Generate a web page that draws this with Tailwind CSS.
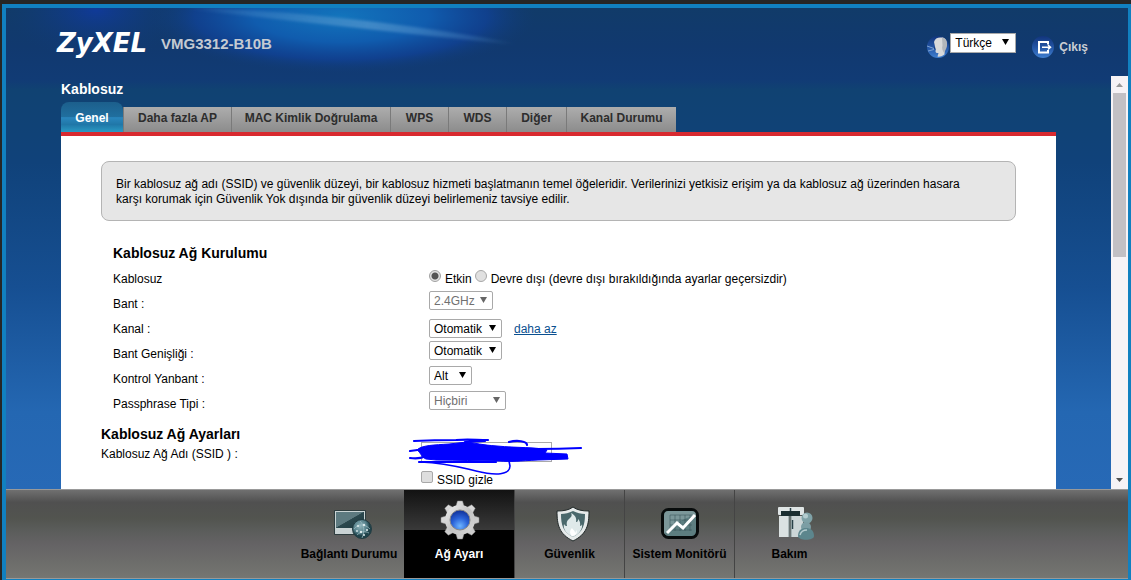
<!DOCTYPE html>
<html lang="tr">
<head>
<meta charset="utf-8">
<title>ZyXEL VMG3312-B10B</title>
<script src="https://cdn.jsdelivr.net/npm/@tailwindcss/browser@4"></script>
</head>
<body class="h-screen overflow-hidden bg-[#262626] pt-1 pl-0.5 font-['Liberation_Sans',Arial,sans-serif] text-[12px] leading-[15px] text-black">
<div class="flex h-full flex-col border-4 border-b border-r-[3px] border-[#1180c0]">

  <div class="flex min-h-0 flex-1 flex-col bg-linear-[180deg,#113b69_0%,#11396f_8%,#113b75_15%,#104272_17%,#10427a_32%,#164f92_58%,#2467b2_84%,#2769b6_100%]">
    <header class="relative flex h-[68px] shrink-0 items-start pr-10 pl-[51px]">
      <svg class="pointer-events-none absolute top-0 left-0 h-[68px] w-[540px]" viewBox="0 0 540 68" aria-hidden="true">
        <defs>
          <radialGradient id="g1"><stop offset="0" stop-color="#1274bc"/><stop offset=".45" stop-color="#105cae"/><stop offset=".75" stop-color="#104296" stop-opacity=".8"/><stop offset="1" stop-color="#113b75" stop-opacity="0"/></radialGradient>
          <radialGradient id="g2"><stop offset="0" stop-color="#103a98"/><stop offset="1" stop-color="#113b75" stop-opacity="0"/></radialGradient>
          <linearGradient id="g3"><stop offset="0" stop-color="#5a9ad0" stop-opacity="0"/><stop offset=".55" stop-color="#5a9ad0" stop-opacity=".6"/><stop offset="1" stop-color="#5a9ad0" stop-opacity="0"/></linearGradient>
          <filter id="soft"><feGaussianBlur stdDeviation="1.500"/></filter>
        </defs>
        <ellipse cx="90" cy="2" rx="90" ry="50" fill="url(#g2)"/>
        <ellipse cx="335" cy="8" rx="195" ry="58" fill="url(#g1)"/>
        <path d="M180 0Q340 6 510 36Q340 18 180 0z" fill="url(#g3)" stroke="url(#g3)" stroke-width="2" filter="url(#soft)"/>
      </svg>
      <span class="relative mt-[15px] w-[90px] font-['DejaVu_Sans',sans-serif] text-[26px] leading-10 font-bold text-white italic">ZyXEL</span>
      <span class="relative mt-7 ml-[14px] text-[15px] leading-4 font-bold text-[#c4cad2]">VMG3312-B10B</span>
      <div class="mt-[25px] ml-auto flex items-start">
        <svg class="mt-0.5 size-6" viewBox="0 0 24 24" aria-hidden="true">
          <defs><linearGradient id="orb" x1="0" y1="0" x2="0" y2="1"><stop offset="0" stop-color="#12357c"/><stop offset=".5" stop-color="#2354a4"/><stop offset="1" stop-color="#3f7fd0"/></linearGradient></defs>
          <circle cx="12" cy="12" r="11" fill="url(#orb)"/>
          <path d="M8 7c1-4 4-5 8-4.500 4 .5 5 4 4.500 8-.5 3-2 4-2 6.500l0 2.500c-3 2-5 2.500-7 2l1-3.500c-2 .3-3-.3-3-2l.5-2c-1 0-2-1-1-2.500z" fill="#d8d9da"/>
          <path d="M16 2.500c4 0 5.500 4 5 8-.5 4-2 4-2.500 8-2-3-3-5-2-8z" fill="#b2b6ba"/>
          <path d="M9 11.500c-1 0-1.500 1-1 2.500l1.500 0z" fill="#1a3d80"/>
          <path d="M8 13.500L1 11M8 14.500l-6 1.500" stroke="#7da2d4" stroke-width="1"/>
        </svg>
        <span class="grid">
          <select aria-label="Dil" class="col-start-1 row-start-1 h-5 w-[66px] appearance-none border border-[#a9a9a9] bg-white pl-1 leading-[18px]"><option>Türkçe</option></select>
          <svg class="pointer-events-none col-start-1 row-start-1 mt-1.5 mr-[7px] h-1.5 w-[7px] justify-self-end" viewBox="0 0 7 6" aria-hidden="true"><path d="M0 0h7L3.500 6z" fill="#000"/></svg>
        </span>
        <a href="#" class="ml-[15px] flex items-start font-bold text-[#c9cdd3]">
          <svg class="mt-0.5 size-6" viewBox="0 0 24 24" aria-hidden="true">
            <circle cx="12" cy="12" r="11" fill="url(#orb)"/>
            <path d="M17 9.500V7H8v10.500h9V15" fill="none" stroke="#fff" stroke-width="2"/>
            <path d="M11 12.200h8.500M17 10l2.500 2.200-2.500 2.200" fill="none" stroke="#fff" stroke-width="1.500"/>
          </svg>
          <span class="mt-[7px] ml-1">Çıkış</span>
        </a>
      </div>
    </header>

    <div class="flex min-h-0 flex-1">
      <main class="min-w-0 flex-1 overflow-hidden px-[55px] pt-1.5">
        <h1 class="h-5 text-[14px] font-bold text-white">Kablosuz</h1>
        <nav class="flex items-end text-center font-bold text-[#2d2d2d]">
          <a href="#" class="h-[30px] w-[62px] rounded-t-lg bg-linear-[180deg,#1c5f8c_0%,#206f9f_50%,#2a86bd_52%,#2077a8_75%,#2a9ac4_100%] pt-[9px] text-white">Genel</a>
          <a href="#" class="h-[25px] w-[108px] border-l border-[#7a7a7a] bg-linear-to-b from-[#adadad] to-[#8c8c8c] pt-1">Daha fazla AP</a>
          <a href="#" class="h-[25px] w-[159px] border-l border-[#7a7a7a] bg-linear-to-b from-[#adadad] to-[#8c8c8c] pt-1">MAC Kimlik Doğrulama</a>
          <a href="#" class="h-[25px] w-[58px] border-l border-[#7a7a7a] bg-linear-to-b from-[#adadad] to-[#8c8c8c] pt-1">WPS</a>
          <a href="#" class="h-[25px] w-[58px] border-l border-[#7a7a7a] bg-linear-to-b from-[#adadad] to-[#8c8c8c] pt-1">WDS</a>
          <a href="#" class="h-[25px] w-[60px] border-l border-[#7a7a7a] bg-linear-to-b from-[#adadad] to-[#8c8c8c] pt-1">Diğer</a>
          <a href="#" class="h-[25px] w-[110px] border-l border-[#7a7a7a] bg-linear-to-b from-[#adadad] to-[#8c8c8c] pt-1">Kanal Durumu</a>
        </nav>

        <form class="h-full border-t-4 border-[#d8292f] bg-white px-10 pt-[25px]">
          <p class="rounded-lg border border-[#b4b4b4] bg-[#e6e6e6] px-[14px] pt-[15px] pb-[13px]">Bir kablosuz ağ adı (SSID) ve güvenlik düzeyi, bir kablosuz hizmeti başlatmanın temel öğeleridir. Verilerinizi yetkisiz erişim ya da kablosuz ağ üzerinden hasara<br>karşı korumak için Güvenlik Yok dışında bir güvenlik düzeyi belirlemeniz tavsiye edilir.</p>

          <div class="mt-6 pl-3">
            <h2 class="mb-[5px] text-[14px] leading-4 font-bold">Kablosuz Ağ Kurulumu</h2>
            <div class="grid h-[25px] grid-cols-[316px_1fr] leading-[27px]">
              <span>Kablosuz</span>
              <div class="flex items-start">
                <input id="on" name="wl" type="radio" checked class="mt-1 size-3 appearance-none rounded-full border border-[#a0a0a0] bg-[radial-gradient(circle,#555_0_3px,#e4e4e4_4px)]">
                <label for="on" class="ml-1">Etkin</label>
                <input id="off" name="wl" type="radio" class="mt-1 ml-[3px] size-3 appearance-none rounded-full border border-[#a8a8a8] bg-[#e0e0e0]">
                <label for="off" class="ml-1">Devre dışı (devre dışı bırakıldığında ayarlar geçersizdir)</label>
              </div>
            </div>
            <div class="grid h-[25px] grid-cols-[316px_1fr] items-start">
              <label for="band" class="leading-[27px]">Bant :</label>
              <span class="grid w-16">
                <select id="band" disabled class="col-start-1 row-start-1 h-[19px] appearance-none rounded-xs border border-[#a9a9a9] bg-white pt-px pl-1 leading-4 text-[#707070]"><option>2.4GHz</option></select>
                <svg class="pointer-events-none col-start-1 row-start-1 mt-1.5 mr-1.5 h-1.5 w-[7px] justify-self-end" viewBox="0 0 7 6" aria-hidden="true"><path d="M0 0h7L3.500 6z" fill="#666"/></svg>
              </span>
            </div>
            <div class="grid h-[25px] grid-cols-[316px_1fr] items-start">
              <label for="chan" class="leading-[27px]">Kanal :</label>
              <div class="mt-[3px] flex items-center">
                <span class="grid w-[73px]">
                  <select id="chan" class="col-start-1 row-start-1 h-[19px] appearance-none rounded-xs border border-[#a9a9a9] bg-white pt-px pl-1 leading-4"><option>Otomatik</option></select>
                  <svg class="pointer-events-none col-start-1 row-start-1 mt-1.5 mr-1.5 h-1.5 w-[7px] justify-self-end" viewBox="0 0 7 6" aria-hidden="true"><path d="M0 0h7L3.500 6z" fill="#000"/></svg>
                </span>
                <a href="#" class="mt-0.5 ml-3 text-[#0a5090] underline">daha az</a>
              </div>
            </div>
            <div class="grid h-[25px] grid-cols-[316px_1fr] items-start">
              <label for="bw" class="leading-[27px]">Bant Genişliği :</label>
              <span class="grid w-[73px]">
                <select id="bw" class="col-start-1 row-start-1 h-[19px] appearance-none rounded-xs border border-[#a9a9a9] bg-white pt-px pl-1 leading-4"><option>Otomatik</option></select>
                <svg class="pointer-events-none col-start-1 row-start-1 mt-1.5 mr-1.5 h-1.5 w-[7px] justify-self-end" viewBox="0 0 7 6" aria-hidden="true"><path d="M0 0h7L3.500 6z" fill="#000"/></svg>
              </span>
            </div>
            <div class="grid h-[25px] grid-cols-[316px_1fr] items-start">
              <label for="side" class="leading-[27px]">Kontrol Yanbant :</label>
              <span class="grid w-[43px]">
                <select id="side" class="col-start-1 row-start-1 h-[19px] appearance-none rounded-xs border border-[#a9a9a9] bg-white pt-px pl-1 leading-4"><option>Alt</option></select>
                <svg class="pointer-events-none col-start-1 row-start-1 mt-1.5 mr-1.5 h-1.5 w-[7px] justify-self-end" viewBox="0 0 7 6" aria-hidden="true"><path d="M0 0h7L3.500 6z" fill="#000"/></svg>
              </span>
            </div>
            <div class="grid h-[25px] grid-cols-[316px_1fr] items-start">
              <label for="pass" class="leading-[27px]">Passphrase Tipi :</label>
              <span class="grid w-[77px]">
                <select id="pass" disabled class="col-start-1 row-start-1 h-[19px] appearance-none rounded-xs border border-[#a9a9a9] bg-white pt-px pl-1 leading-4 text-[#707070]"><option>Hiçbiri</option></select>
                <svg class="pointer-events-none col-start-1 row-start-1 mt-1.5 mr-1.5 h-1.5 w-[7px] justify-self-end" viewBox="0 0 7 6" aria-hidden="true"><path d="M0 0h7L3.500 6z" fill="#666"/></svg>
              </span>
            </div>
          </div>

          <h2 class="mt-2.5 text-[14px] leading-4 font-bold">Kablosuz Ağ Ayarları</h2>
          <div class="grid grid-cols-[320px_1fr] items-start">
            <label for="ssid" class="mt-[5px]">Kablosuz Ağ Adı (SSID ) :</label>
            <div class="relative">
              <input id="ssid" type="text" class="block h-5 w-[131px] border border-[#a9a9a9] bg-white px-1">
              <svg class="pointer-events-none absolute -top-[5px] -left-[14px] h-10 w-[180px]" viewBox="0 0 180 40" fill="none" stroke="#00f" stroke-linecap="round" aria-hidden="true">
                <path d="M10 13C14 8 28 8 42 7L60 5c8 1 15 3 30 4 20 2 40 1 50 4l-2 3 22 1 1 5-30 1c-20 1-25 2-40 1-20 0-40-1-62-1l-10-1c-5-2-4-5-9-9z" fill="#00f" stroke-width="1"/>
                <path d="M7 4c20-1 30-1 42-1 12-1 20 0 32 0M58 5l20-1M102 5c8-2 18-1 18 3M3 14l15-2M3 21c9 1 12 0 20-4M130 12c10 0 22 0 44-1M125 22l34-1M12 25l77 0" stroke-width="2.200"/>
                <path d="M14 25c25 1 38 5 55 9 20 5 34 4 34-5l-1-5" stroke-width="1.600"/>
              </svg>
              <div class="mt-2 flex items-start">
                <input id="hide" type="checkbox" class="mt-px size-3 appearance-none rounded-xs border border-[#a8a8a8] bg-[#dedede]">
                <label for="hide" class="mt-[3px] ml-1">SSID gizle</label>
              </div>
            </div>
          </div>
        </form>
      </main>

      <div class="flex w-[17px] flex-col items-center bg-[#f6f3f6]" aria-hidden="true">
        <svg class="h-[17px] w-[17px] shrink-0" viewBox="0 0 17 17"><path d="M5 11L8.500 7 12 11z" fill="#999"/></svg>
        <div class="h-[164px] w-[13px] bg-[#c2c0c4]"></div>
        <svg class="mt-auto h-[17px] w-[17px] shrink-0" viewBox="0 0 17 17"><path d="M5 6h7L8.500 10z" fill="#505050"/></svg>
      </div>
    </div>
  </div>

  <nav class="flex h-[90px] shrink-0 justify-center border-y border-[#999] bg-linear-[180deg,#707070_0%,#505050_14%,#52544f_32%,#5a5c5a_45%,#656365_62%,#6c6c6a_80%,#757672_100%] pl-1 text-center font-bold">
    <a href="#" class="flex w-[110px] flex-col items-center pt-[17px] whitespace-nowrap">
      <svg class="ml-2 h-8 w-10" viewBox="0 0 40 32" aria-hidden="true">
        <defs><linearGradient id="scr" x1="0" y1="0" x2="1" y2="1"><stop offset="0" stop-color="#5d7a80"/><stop offset=".48" stop-color="#5d7a80"/><stop offset=".5" stop-color="#2b484e"/><stop offset="1" stop-color="#1e3a40"/></linearGradient>
        <radialGradient id="ball" cx=".4" cy=".35"><stop offset="0" stop-color="#8fb4bb"/><stop offset=".7" stop-color="#55808a"/><stop offset="1" stop-color="#1f434b"/></radialGradient></defs>
        <rect x="1" y="3" width="32" height="25" rx="1" fill="#2e3d3f"/>
        <rect x="2" y="4" width="30" height="23" fill="#c9d3d4"/>
        <rect x="3" y="5" width="28" height="16" fill="url(#scr)"/>
        <circle cx="29" cy="22" r="9.500" fill="url(#ball)" stroke="#223c42"/>
        <path d="M21 22c5-6 11-5 16 0M24 28c4-4 8-4 12-2M27 14c4 4 5 10 2 17" fill="none" stroke="#9fc0c5" stroke-width=".7"/>
        <g fill="#dceaec"><circle cx="25" cy="19" r="1.100"/><circle cx="31" cy="18" r="1.200"/><circle cx="34" cy="23" r="1.100"/><circle cx="28" cy="25" r="1.200"/><circle cx="31" cy="28" r="1"/><circle cx="24" cy="24" r=".9"/></g>
      </svg>
      <span class="mt-2">Bağlantı Durumu</span>
    </a>
    <a href="#" class="flex w-[110px] flex-col items-center bg-linear-[180deg,#121212_0%,#3a3a3a_46%,#000_46%,#000_100%] pt-[10px] text-white">
      <svg class="ml-0.5 size-10" viewBox="0 0 40 40" aria-hidden="true">
        <defs><linearGradient id="steel" x1="0" y1="0" x2="1" y2="1"><stop offset="0" stop-color="#f2f2f2"/><stop offset=".5" stop-color="#c2c2c2"/><stop offset="1" stop-color="#dadada"/></linearGradient>
        <radialGradient id="blue" cx=".5" cy=".8" r=".8"><stop offset="0" stop-color="#6db4ff"/><stop offset=".5" stop-color="#2a62d8"/><stop offset="1" stop-color="#0f2f96"/></radialGradient></defs>
        <g fill="url(#steel)" stroke="#8b8b8b" stroke-width=".5">
          <path d="M17.500 1h5l1.500 5h-8zM17.500 39h5l1.500-5h-8zM1 17.500v5l5 1.500v-8zM39 17.500v5l-5 1.500v-8z"/>
          <path d="M17.500 1h5l1.500 5h-8zM17.500 39h5l1.500-5h-8zM1 17.500v5l5 1.500v-8zM39 17.500v5l-5 1.500v-8z" transform="rotate(45 20 20)"/>
        </g>
        <circle cx="20" cy="20" r="15" fill="url(#steel)"/>
        <circle cx="20" cy="20" r="10" fill="url(#blue)" stroke="#888"/>
      </svg>
      <span class="mt-[7px]">Ağ Ayarı</span>
    </a>
    <a href="#" class="flex w-[110px] flex-col items-center border-l border-[#444] pt-[16px]">
      <svg class="ml-1.5 h-9 w-[34px]" viewBox="0 0 34 36" aria-hidden="true">
        <path d="M17 1c4 3 9 4 16 4 0 14-2 23-16 30C3 28 1 19 1 5c7 0 12-1 16-4z" fill="#e6eaea" stroke="#202828"/>
        <path d="M17 5c4 2 8 3 12 3 0 11-2 18-12 23C7 26 5 19 5 8c4 0 8-1 12-3z" fill="#4a686c"/>
        <path d="M17 31C9 27 7 22 8 18c1 2 2 2 3 2-1-5 1-6 3-8 2-2 2-3 1-5 4 2 6 5 5 9 2 0 2-2 2-3 3 3 2 6 2 7 1 0 2-1 2-2 1 5-3 10-9 13z" fill="#dfe9ea"/>
        <path d="M16 30c-3-3-2-6 0-8 1 2 3 2 3 5 1-1 1-2 1-3 2 3 0 5-3 6z" fill="#fff"/>
      </svg>
      <span class="mt-[5px]">Güvenlik</span>
    </a>
    <a href="#" class="flex w-[110px] flex-col items-center border-l border-[#444] pt-[16px] whitespace-nowrap">
      <svg class="h-[34px] w-10" viewBox="0 0 40 34" aria-hidden="true">
        <rect x="2.500" y="3.500" width="35" height="28" rx="6" fill="#5d7e80" stroke="#080c0c" stroke-width="3"/>
        <path d="M4 28V9q0-4 4-4h24q4 0 4 4-20 5-32 19z" fill="#8fa9aa" opacity=".6"/>
        <path d="M10 9h22M10 14h22M10 19h22M10 24h22M10 9v16M15 9v16M20 9v16M25 9v16M30 9v16" stroke="#314f51" stroke-width=".5"/>
        <path d="M7 27l10-10 6 5L35 9" fill="none" stroke="#fff" stroke-width="3"/>
      </svg>
      <span class="mt-[7px]">Sistem Monitörü</span>
    </a>
    <a href="#" class="flex w-[110px] flex-col items-center border-l border-[#444] pt-[16px]">
      <svg class="ml-3 h-9 w-[38px]" viewBox="0 0 38 36" aria-hidden="true">
        <rect x="1" y="1" width="26" height="8" rx="1" fill="#dfe5e5"/>
        <rect x="4" y="5" width="19" height="5" fill="#1b2e31"/>
        <path d="M2 10h10v21H2z" fill="#dbe2e2"/><path d="M14 10h12v21H14z" fill="#ccd6d7"/>
        <path d="M13.500 2v3M15.500 14v9" stroke="#294248" stroke-width="1.500"/>
        <path d="M12 10v21M14 10v21" stroke="#7c9092"/>
        <circle cx="30" cy="12" r="5.500" fill="#7fa2a7"/><circle cx="28.500" cy="10" r="2.500" fill="#b4cccf"/>
        <circle cx="29" cy="21" r="5" fill="#7c9ea4"/>
        <path d="M21 30c0-6 4-8 8-8s8 2 8 8c0 5-16 5-16 0z" fill="#5c868d"/>
        <path d="M23 29c1-4 4-5 7-5" fill="none" stroke="#b4cccf" stroke-width="1.500"/>
      </svg>
      <span class="mt-[5px]">Bakım</span>
    </a>
  </nav>
</div>
</body>
</html>
